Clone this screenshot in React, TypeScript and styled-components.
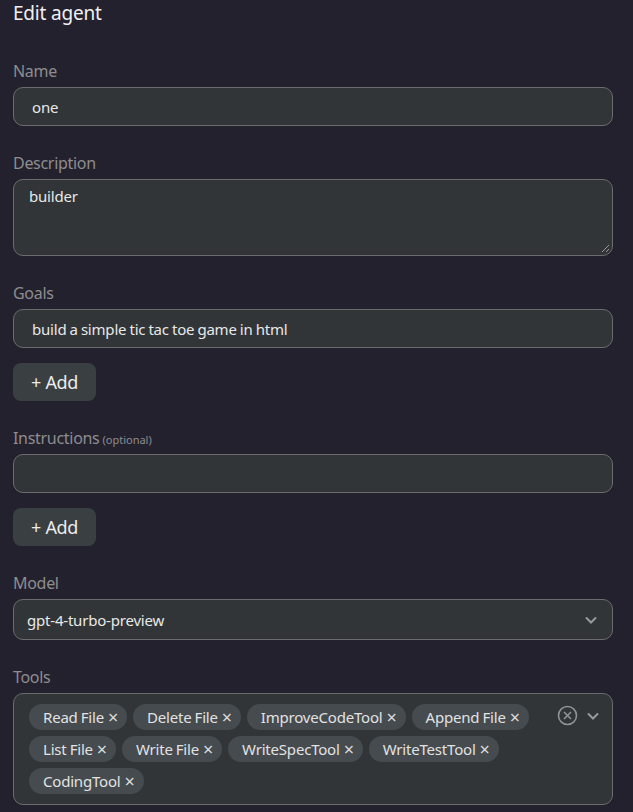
import styled, { createGlobalStyle } from "styled-components";

const GlobalStyle = createGlobalStyle`
  html, body {
    margin: 0;
    padding: 0;
    background-color: #24212e;
  }
  body {
    font-family: "Noto Sans", "Open Sans", sans-serif;
    color: #e6e6e6;
  }
`;

const PageStyle = styled.div`
  width: 633px;
  min-height: 812px;
  box-sizing: border-box;
  padding: 0 20px 0 13px;
  display: flex;
  flex-direction: column;
  gap: 26px;
`;

const TitleStyle = styled.h1`
  margin: 0;
  padding-top: 1px;
  font-size: 19px;
  font-weight: 400;
  line-height: 24px;
  letter-spacing: -0.2px;
  color: #f0f0f0;
  margin-bottom: 9px;
`;

const FieldStyle = styled.div`
  display: flex;
  flex-direction: column;
  align-items: flex-start;
`;

const LabelStyle = styled.label`
  font-size: 16px;
  line-height: 22px;
  height: 22px;
  letter-spacing: -0.3px;
  color: #8d8d8f;
  margin-bottom: 5px;
  small {
    font-size: 11px;
    line-height: 0;
    letter-spacing: 0;
    margin-left: 3px;
  }
`;

const BoxStyle = styled.div<{ $height?: number }>`
  width: 100%;
  box-sizing: border-box;
  height: ${(p) => p.$height ?? 39}px;
  background-color: #313537;
  border: 1px solid #6c6c6c;
  border-radius: 10px;
  padding: 0 18px;
  font-size: 15px;
  letter-spacing: -0.2px;
  word-spacing: -0.6px;
  color: #e8e8e8;
  display: flex;
  align-items: center;
`;

const TextAreaStyle = styled(BoxStyle)`
  align-items: flex-start;
  padding: 6px 15px;
  position: relative;
`;

const Grip = styled.svg`
  position: absolute;
  right: 2px;
  bottom: 2px;
`;

const SelectStyle = styled(BoxStyle)`
  justify-content: space-between;
  padding: 0 14px 0 13px;
`;

const AddButton = styled.button`
  margin-top: 15px;
  height: 38px;
  padding: 0 18px;
  border: none;
  border-radius: 8px;
  background-color: #3a3f42;
  color: #ececec;
  font-family: inherit;
  font-size: 18px;
  letter-spacing: -0.3px;
`;

const TagBoxStyle = styled.div`
  width: 100%;
  box-sizing: border-box;
  min-height: 110px;
  background-color: #313537;
  border: 1px solid #6c6c6c;
  border-radius: 10px;
  padding: 10px 12px 10px 15px;
  display: flex;
  align-items: flex-start;
`;

const TagListStyle = styled.div`
  flex: 1;
  display: flex;
  flex-wrap: wrap;
  gap: 6px;
`;

const TagStyle = styled.span`
  height: 26px;
  display: inline-flex;
  align-items: center;
  gap: 4px;
  padding: 0 9px 0 14px;
  border-radius: 13px;
  background-color: #454b4f;
  color: #e2e2e2;
  font-size: 15px;
  letter-spacing: -0.2px;
  word-spacing: -0.6px;
`;

const TagRemove = styled.span`
  font-size: 18px;
  line-height: 1;
  color: #dcdcdc;
`;

const ControlsStyle = styled.div`
  display: flex;
  align-items: center;
  gap: 8px;
  padding-top: 1px;
`;

const tools = [
  "Read File",
  "Delete File",
  "ImproveCodeTool",
  "Append File",
  "List File",
  "Write File",
  "WriteSpecTool",
  "WriteTestTool",
  "CodingTool",
];

const Chevron = () => (
  <svg width="14" height="14" viewBox="0 0 14 14">
    <path d="M2.5 5 L7 9.5 L11.5 5" fill="none" stroke="#959a9d" strokeWidth="2" strokeLinecap="round" />
  </svg>
);

const App = () => {
  return (
    <>
      <GlobalStyle />
      <PageStyle>
        <TitleStyle>Edit agent</TitleStyle>

        <FieldStyle>
          <LabelStyle>Name</LabelStyle>
          <BoxStyle>one</BoxStyle>
        </FieldStyle>

        <FieldStyle>
          <LabelStyle>Description</LabelStyle>
          <TextAreaStyle $height={77}>
            builder
            <Grip width="10" height="10" viewBox="0 0 10 10">
              <path d="M9 2 L2 9 M9 6 L6 9" stroke="#9a9a9a" strokeWidth="1" />
            </Grip>
          </TextAreaStyle>
        </FieldStyle>

        <FieldStyle>
          <LabelStyle>Goals</LabelStyle>
          <BoxStyle>build a simple tic tac toe game in html</BoxStyle>
          <AddButton>+ Add</AddButton>
        </FieldStyle>

        <FieldStyle>
          <LabelStyle>
            Instructions<small>(optional)</small>
          </LabelStyle>
          <BoxStyle />
          <AddButton>+ Add</AddButton>
        </FieldStyle>

        <FieldStyle>
          <LabelStyle>Model</LabelStyle>
          <SelectStyle $height={41}>
            <span>gpt-4-turbo-preview</span>
            <Chevron />
          </SelectStyle>
        </FieldStyle>

        <FieldStyle>
          <LabelStyle>Tools</LabelStyle>
          <TagBoxStyle>
            <TagListStyle>
              {tools.map((t) => (
                <TagStyle key={t}>
                  {t}
                  <TagRemove>×</TagRemove>
                </TagStyle>
              ))}
            </TagListStyle>
            <ControlsStyle>
              <svg width="21" height="21" viewBox="0 0 21 21">
                <circle cx="10.5" cy="10.5" r="9" fill="none" stroke="#8e9295" strokeWidth="1.6" />
                <path d="M7 7 L14 14 M14 7 L7 14" stroke="#8e9295" strokeWidth="1.6" />
              </svg>
              <Chevron />
            </ControlsStyle>
          </TagBoxStyle>
        </FieldStyle>
      </PageStyle>
    </>
  );
};

export default App;
